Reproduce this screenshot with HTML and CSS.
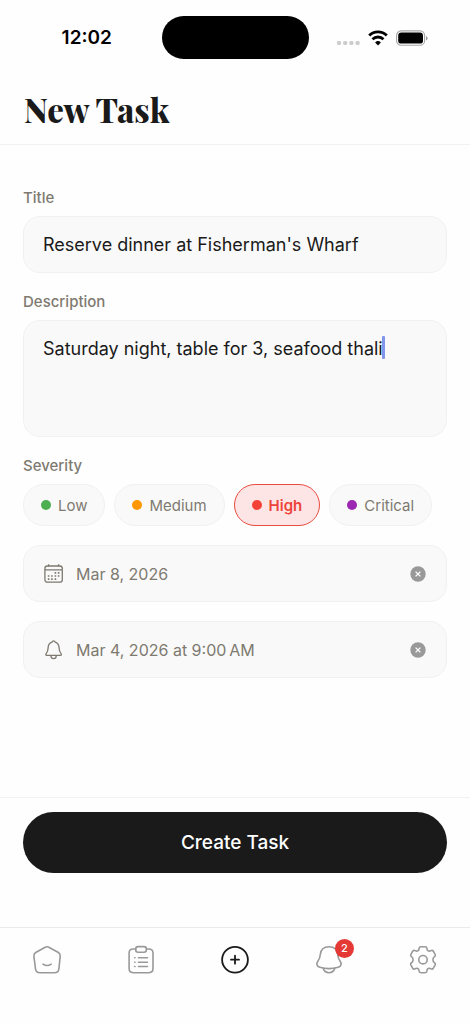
FILE: index.html
```html
<!DOCTYPE html>
<html lang="en">
<head>
<meta charset="utf-8">
<meta name="viewport" content="width=device-width, initial-scale=1">
<title>New Task</title>
<link rel="stylesheet" href="styles.css">
</head>
<body>
<div class="app">
  <div class="status">
    <div class="status-time">12:02</div>
    <div class="island"></div>
    <div class="status-icons">
      <svg width="24" height="18" viewBox="0 0 24 18" fill="#cdcdcd"><rect x="1" y="12" width="4" height="4" rx="1.3"/><rect x="7.2" y="12" width="4" height="4" rx="1.3"/><rect x="13.4" y="12" width="4" height="4" rx="1.3"/><rect x="19.6" y="12" width="4" height="4" rx="1.3"/></svg>
      <svg width="20" height="18" viewBox="0 0 20 18" fill="none" stroke="#000" stroke-width="2.8"><path d="M1.2 6.5A12.6 12.6 0 0 1 18.8 6.5"/><path d="M4.5 10.2A8 8 0 0 1 15.5 10.2"/><path d="M10 16.4L7.1 13.5A4.1 4.1 0 0 1 12.9 13.5Z" fill="#000" stroke="none"/></svg>
      <svg width="32" height="18" viewBox="0 0 32 18"><rect x=".6" y="1.9" width="28" height="14.4" rx="4.6" fill="none" stroke="#a5a5a5" stroke-width="1.1"/><rect x="2.2" y="3.6" width="24.8" height="11" rx="3.2"/><path d="M30 7v4.4q1.6-.8 1.6-2.2T30 7Z" fill="#999"/></svg>
    </div>
  </div>
  <header class="header"><h1>New Task</h1></header>
  <form class="form" id="task-form">
    <div class="group">
      <label for="title">Title</label>
      <input class="box" id="title" type="text" value="Reserve dinner at Fisherman's Wharf">
    </div>
    <div class="group">
      <label for="description">Description</label>
      <div class="area-wrap">
        <textarea class="box area" id="description">Saturday night, table for 3, seafood thali</textarea>
        <span class="caret"></span>
      </div>
    </div>
    <div class="group" role="group" aria-labelledby="severity-label">
      <span class="label" id="severity-label">Severity</span>
      <div class="chips">
        <button class="chip" type="button"><span class="dot low"></span>Low</button>
        <button class="chip" type="button"><span class="dot medium"></span>Medium</button>
        <button class="chip selected" type="button" aria-pressed="true"><span class="dot high"></span>High</button>
        <button class="chip" type="button"><span class="dot critical"></span>Critical</button>
      </div>
    </div>
    <div class="box row">
      <button class="picker" type="button">
        <svg width="22" height="22" viewBox="0 0 22 22" fill="none" stroke="#7e7a70" stroke-width="1.3"><rect x="1.9" y="3" width="17.4" height="16.2" rx="2.5"/><path d="M2 6.8h17.2M5.6 1.2v2.2M15.6 1.2v2.2"/><path d="M11.6 9.9h1.6M14.8 9.9h1.6M4.8 13h1.6M8.1 13h1.6M11.6 13h1.6M14.8 13h1.6M4.8 16.1h1.6M8.1 16.1h1.6M11.6 16.1h1.6" stroke-width="1.6"/></svg>
        <span>Mar 8, 2026</span>
      </button>
      <button class="clear" type="button" aria-label="Clear date"><svg width="16" height="16" viewBox="0 0 16 16"><circle cx="8" cy="8" r="7.7" fill="#999"/><path d="M5.6 5.6l4.8 4.8M10.4 5.6l-4.8 4.8" stroke="#fff" stroke-width="1.3"/></svg></button>
    </div>
    <div class="box row">
      <button class="picker" type="button">
        <svg width="22" height="22" viewBox="0 0 22 22" fill="none" stroke="#7e7a70" stroke-width="1.3" stroke-linejoin="round"><path d="M10.6 1.9C11.3 1.9 12 2.5 12.3 3.1C15 4.1 16.1 6.3 16.1 9.1C16.1 12.4 17 13.5 18.2 15C18.6 15.6 18.3 16.3 17.6 16.3H3.6C2.9 16.3 2.6 15.6 3 15C4.2 13.5 5.1 12.4 5.1 9.1C5.1 6.3 6.2 4.1 8.9 3.1C9.2 2.5 9.9 1.9 10.6 1.9Z"/><path d="M8 16.4V17A2.6 2.6 0 0 0 13.2 17V16.4"/></svg>
        <span>Mar 4, 2026 at 9:00&#8239;AM</span>
      </button>
      <button class="clear" type="button" aria-label="Clear reminder"><svg width="16" height="16" viewBox="0 0 16 16"><circle cx="8" cy="8" r="7.7" fill="#999"/><path d="M5.6 5.6l4.8 4.8M10.4 5.6l-4.8 4.8" stroke="#fff" stroke-width="1.3"/></svg></button>
    </div>
  </form>
  <div class="submit"><button class="create" type="submit" form="task-form">Create Task</button></div>
  <nav class="tabs">
    <a href="#home" aria-label="Home"><svg width="30" height="30" viewBox="0 0 30 30"><path d="M13.2 2.2Q15 1.2 16.8 2.2L26.4 7.5Q28.5 8.8 28.2 11.3L26.9 23.8Q26.4 27.7 22.5 27.7H8Q4.1 27.7 3.5 23.8L1.9 11.3Q1.6 8.8 3.7 7.5Z"/><path d="M11 19.1Q15 21.9 19.2 19.1"/></svg></a>
    <a href="#tasks" aria-label="Tasks"><svg width="30" height="30" viewBox="0 0 30 30"><path d="M9.7 4H7.2Q3.1 4 3.1 8.1V23.6Q3.1 27.7 7.2 27.7H22.9Q27 27.7 27 23.6V8.1Q27 4 22.9 4H20.4"/><rect x="9.7" y="1.6" width="10.7" height="5.6" rx="2.4"/><path d="M12.5 12.8h9M12.5 17.2h9M12.5 21.5h9M8.7 12.8h.3M8.7 17.2h.3M8.7 21.5h.3"/></svg></a>
    <a class="active" href="#new" aria-label="New task" aria-current="page"><svg width="30" height="30" viewBox="0 0 30 30"><circle cx="15" cy="14.7" r="12.9"/><path d="M15 10.7v8M11 14.7h8"/></svg></a>
    <a href="#alerts" aria-label="Notifications, 2 unread"><svg width="30" height="30" viewBox="0 0 30 30"><path d="M15 1.7C9.7 1.7 6.7 5 6.3 9.5C6 13.3 5.8 13.6 4.1 15.8C2 18.6 2.7 21.3 5.8 22.2C11.7 24 18.3 24 24.2 22.2C27.3 21.3 28 18.6 25.9 15.8C24.2 13.6 24 13.3 23.7 9.5C23.3 5 20.3 1.7 15 1.7Z"/><path d="M9.2 23.3C10 26.1 12 27.7 15 27.7S20 26.1 20.8 23.3"/></svg><span class="badge">2</span></a>
    <a href="#settings" aria-label="Settings"><svg width="30" height="30" viewBox="0 0 30 30"><circle cx="15" cy="14.7" r="4.2"/><path d="M13 1.7H17Q18.8 1.7 18.9 3.4C19 5.8 20.8 6.8 22.9 5.6Q24.4 4.8 25.3 6.2L27.1 9.3Q27.9 10.8 26.5 11.6C24.4 12.8 24.4 16.6 26.5 17.8Q27.9 18.6 27.1 20.1L25.3 23.2Q24.4 24.6 22.9 23.8C20.8 22.6 19 23.6 18.9 26Q18.8 27.7 17 27.7H13Q11.2 27.7 11.1 26C11 23.6 9.2 22.6 7.1 23.8Q5.6 24.6 4.7 23.2L2.9 20.1Q2.1 18.6 3.5 17.8C5.6 16.6 5.6 12.8 3.5 11.6Q2.1 10.8 2.9 9.3L4.7 6.2Q5.6 4.8 7.1 5.6C9.2 6.8 11 5.8 11.1 3.4Q11.2 1.7 13 1.7Z"/></svg></a>
  </nav>
</div>
</body>
</html>
```
FILE: styles.css
```css
* {
  box-sizing: border-box;
}

body {
  margin: 0;
  background: #fefefe;
  color: #1a1a1a;
  font-family: Inter, "Liberation Sans", sans-serif;
}

button,
input,
textarea {
  font: inherit;
  color: inherit;
}

button {
  cursor: pointer;
}

svg {
  display: block;
  flex: none;
}

.app {
  display: flex;
  flex-direction: column;
  min-height: 100vh;
}

.status {
  display: grid;
  grid-template-columns: 1fr auto 1fr;
  align-items: center;
  padding: 16px 0;
}

.status-time {
  padding-left: 12px;
  color: #000;
  font-size: 19px;
  font-weight: 600;
  line-height: 24px;
  text-align: center;
}

.island {
  width: 147px;
  height: 43px;
  border-radius: 22px;
  background: #000;
}

.status-icons {
  display: flex;
  gap: 8px;
  padding-left: 27px;
}

.header {
  padding: 12px 24px;
  border-bottom: 1px solid #f2f2f2;
}

.header h1 {
  margin: 0;
  font-family: "Playfair Display", "Liberation Serif", serif;
  font-size: 33px;
  font-weight: 800;
  line-height: 45px;
}

.form {
  display: flex;
  flex: 1;
  flex-direction: column;
  gap: 19px;
  padding: 43px 23px 24px;
}

.group {
  display: flex;
  flex-direction: column;
  gap: 8px;
}

label,
.label {
  color: #7e7a70;
  font-size: 15px;
  font-weight: 500;
  line-height: 20px;
}

.box {
  width: 100%;
  min-height: 57px;
  padding: 0 19px;
  border: 1px solid #f1f1f1;
  border-radius: 17px;
  outline: 0;
  background: #f9f9f9;
  font-size: 18px;
}

.area-wrap {
  position: relative;
}

.area {
  display: block;
  height: 117px;
  padding-top: 16px;
  line-height: 24px;
  resize: none;
  caret-color: transparent;
}

.caret {
  position: absolute;
  top: 16px;
  left: 359px;
  width: 3px;
  height: 23px;
  border-radius: 1px;
  background: #8196ea;
}

.chips {
  display: flex;
  flex-wrap: wrap;
  gap: 9px;
}

.chip {
  display: flex;
  align-items: center;
  gap: 7px;
  height: 42px;
  padding: 0 17px;
  border: 1px solid #f1f1f1;
  border-radius: 21px;
  background: #f9f9f9;
  color: #7e7a70;
  font-size: 15px;
}

.chip.selected {
  border-color: #e94b40;
  background: #fee5e5;
  color: #ed443a;
  font-weight: 600;
}

.dot {
  width: 10px;
  height: 10px;
  border-radius: 50%;
}

.low { background: #4caf50; }
.medium { background: #ff9800; }
.high { background: #f44336; }
.critical { background: #9c27b0; }

.row {
  display: flex;
  align-items: center;
}

.picker {
  display: flex;
  flex: 1;
  align-items: center;
  gap: 11px;
  padding: 0;
  border: 0;
  background: none;
  color: #7e7a70;
  font-size: 16px;
}

.clear {
  padding: 0;
  margin-right: 1px;
  border: 0;
  background: none;
}

.submit {
  padding: 14px 23px 54px;
  border-top: 1px solid #f2f2f2;
}

.create {
  width: 100%;
  height: 61px;
  border: 0;
  border-radius: 31px;
  background: #1a1a1a;
  color: #fff;
  font-size: 19px;
  font-weight: 500;
}

.tabs {
  display: flex;
  height: 97px;
  padding-top: 17px;
  border-top: 1px solid #eaeaea;
}

.tabs a {
  position: relative;
  display: flex;
  flex: 1;
  align-items: flex-start;
  justify-content: center;
  text-decoration: none;
}

.tabs svg {
  fill: none;
  stroke: #999;
  stroke-width: 1.6;
  stroke-linecap: round;
  stroke-linejoin: round;
}

.tabs .active svg {
  stroke: #1a1a1a;
  stroke-width: 1.8;
}

.badge {
  position: absolute;
  top: -6px;
  left: calc(50% + 6px);
  width: 19px;
  height: 19px;
  border-radius: 50%;
  background: #e53935;
  color: #fff;
  font-size: 11px;
  font-weight: 500;
  line-height: 19px;
  text-align: center;
}
```
